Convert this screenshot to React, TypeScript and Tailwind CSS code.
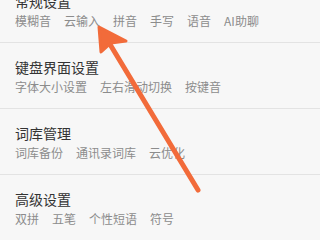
import React from "react";

const sections = [
  { title: "常规设置", items: ["模糊音", "云输入", "拼音", "手写", "语音", "AI助聊"] },
  { title: "键盘界面设置", items: ["字体大小设置", "左右滑动切换", "按键音"] },
  { title: "词库管理", items: ["词库备份", "通讯录词库", "云优化"] },
  { title: "高级设置", items: ["双拼", "五笔", "个性短语", "符号"] },
];

export default function App() {
  return (
    <div
      className="relative w-[320px] h-[240px] overflow-hidden bg-[#f7f7f7]"
      style={{ fontFamily: '"Noto Sans CJK SC", "Noto Sans", sans-serif' }}
    >
      <div className="flex flex-col -mt-[23px]">
        {sections.map((s, i) => (
          <div
            key={s.title}
            className={
              "flex flex-col pl-[15px] pt-[14px] pb-[13px] " +
              (i < sections.length - 1 ? "border-b border-[#e3e3e3]" : "")
            }
          >
            <div className="text-[14px] leading-[20px] text-[#333333]">{s.title}</div>
            <div className="mt-[2px] flex gap-[13px] text-[12px] leading-[16px] text-[#8c8c8c]">
              {s.items.map((it) => (
                <span key={it}>{it}</span>
              ))}
            </div>
          </div>
        ))}
      </div>
      <svg
        className="absolute left-0 top-0"
        width="320"
        height="240"
        viewBox="0 0 320 240"
      >
        <line
          x1="108"
          y1="41"
          x2="198"
          y2="190"
          stroke="#f26b3a"
          strokeWidth="5"
          strokeLinecap="round"
        />
        <polygon
          points="99,27 126,41 111,43 101,52"
          fill="#f26b3a"
          stroke="#f26b3a"
          strokeWidth="3"
          strokeLinejoin="round"
        />
      </svg>
    </div>
  );
}
